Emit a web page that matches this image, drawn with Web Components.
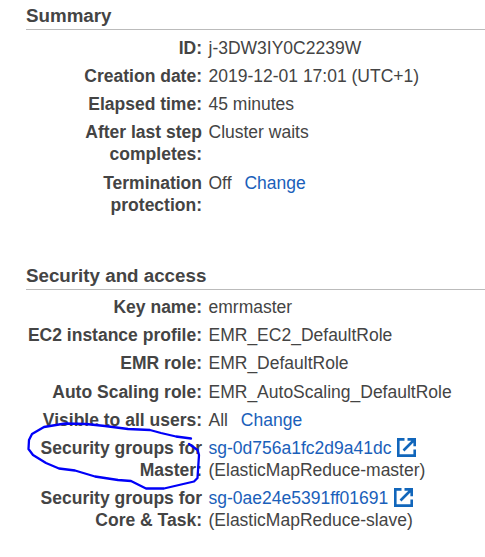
<!DOCTYPE html>
<html lang="en">
<head>
<meta charset="utf-8">
<title>Cluster details</title>
<style>
html,body{margin:0;background:#fff}
body{width:485px;height:557px;overflow:hidden;font-family:"Liberation Sans",Arial,sans-serif;color:#444}
</style>
</head>
<body>
<cluster-details></cluster-details>
<script>
function define(name, html) {
  const template = document.createElement('template');
  template.innerHTML = html;
  customElements.define(name, class extends HTMLElement {
    constructor() {
      super();
      this.attachShadow({ mode: 'open' }).append(template.content.cloneNode(true));
    }
  });
}

define('detail-section', `
<style>
:host{display:block;margin-left:26px}
h2{margin:0;box-sizing:border-box;height:25px;font-size:18.75px;line-height:21px;font-weight:bold;border-bottom:1px solid #bbb}
.rows{display:flex;flex-direction:column;gap:6px;padding-top:var(--rows-top,7px)}
</style>
<h2><slot name="title"></slot></h2>
<div class="rows"><slot></slot></div>`);

define('detail-row', `
<style>
:host{display:grid;grid-template-columns:176px 1fr;column-gap:6.5px;font-size:17.5px;line-height:22px;white-space:nowrap}
.label{text-align:right;font-weight:bold}
</style>
<div class="label"><slot name="label"></slot></div>
<div><slot></slot></div>`);

define('text-link', `
<style>
:host{display:inline;color:#1a60ba}
:host([action]){margin-left:12px}
:host([action="near"]){margin-left:8px}
</style><slot></slot>`);

define('external-icon', `
<style>
:host{display:inline-block;width:19px;height:19px;margin-left:6px;vertical-align:-3px;line-height:0}
svg{display:block}
</style>
<svg width="19" height="19" viewBox="0 0 19 19" fill="none" stroke="#1166bb">
<path d="M7.5 1.4H1.3V17.6H17.7V11.5" stroke-width="2.6"/>
<path d="M10.5 1.4H17.7V8.3M17 2L6.5 12.5" stroke-width="2.6"/>
</svg>`);

define('pen-mark', `
<style>
:host{position:absolute;left:0;top:0;pointer-events:none}
svg{display:block}
</style>
<svg width="220" height="557" fill="none" stroke="#0000f8" stroke-width="2.300" stroke-linecap="round" stroke-linejoin="round">
<path d="M191 438.5L176 436.5L161 433L150 430L128 429L105 426L86 424L65 423.5L44 427L32 434L29 440L28.5 449L33 455L46 463L59 468.5L75 470.5L95 476.5L118 480L131 481L138 484.5L146 488.5L164 488.5L194 481.5L197.500 478L199 455L197.500 450L189 444"/>
</svg>`);

define('cluster-details', `
<style>
:host{display:block;position:relative;padding-top:5px}
.security{margin-top:49px;--rows-top:6px}
.shift{margin-top:1px}
</style>
<detail-section>
<span slot="title">Summary</span>
<detail-row><span slot="label">ID:</span>j-3DW3IY0C2239W</detail-row>
<detail-row><span slot="label">Creation date:</span>2019-12-01 17:01 (UTC+1)</detail-row>
<detail-row><span slot="label">Elapsed time:</span>45 minutes</detail-row>
<detail-row><span slot="label">After last step<br>completes:</span>Cluster waits</detail-row>
<detail-row class="shift"><span slot="label">Termination<br>protection:</span>Off <text-link action="near">Change</text-link></detail-row>
</detail-section>
<detail-section class="security">
<span slot="title">Security and access</span>
<detail-row><span slot="label">Key name:</span>emrmaster</detail-row>
<detail-row><span slot="label">EC2 instance profile:</span>EMR_EC2_DefaultRole</detail-row>
<detail-row><span slot="label">EMR role:</span>EMR_DefaultRole</detail-row>
<detail-row class="shift"><span slot="label">Auto Scaling role:</span>EMR_AutoScaling_DefaultRole</detail-row>
<detail-row><span slot="label">Visible to all users:</span>All <text-link action="near">Change</text-link></detail-row>
<detail-row><span slot="label">Security groups for<br>Master:</span><text-link>sg-0d756a1fc2d9a41dc</text-link><external-icon></external-icon><br>(ElasticMapReduce-master)</detail-row>
<detail-row><span slot="label">Security groups for<br>Core &amp; Task:</span><text-link>sg-0ae24e5391ff01691</text-link><external-icon></external-icon><br>(ElasticMapReduce-slave)</detail-row>
</detail-section>
<pen-mark></pen-mark>`);
</script>
</body>
</html>
